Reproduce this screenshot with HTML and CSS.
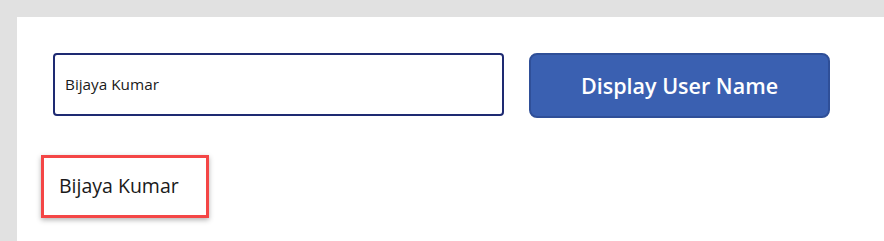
FILE: index.html
```html
<!DOCTYPE html>
<html>
<head>
<meta charset="utf-8">
<link rel="stylesheet" href="styles.css">
</head>
<body>
<div class="card">
  <div class="row">
    <div class="text-input">Bijaya Kumar</div>
    <button class="btn">Display User Name</button>
  </div>
  <div class="label">Bijaya Kumar</div>
</div>
</body>
</html>
```
FILE: styles.css
```css
html, body {
  margin: 0;
  padding: 0;
  height: 100%;
}
body {
  background: #e1e1e1;
  font-family: "Open Sans", "Noto Sans", sans-serif;
  overflow: hidden;
}
.card {
  background: #ffffff;
  margin: 17px 0 0 17px;
  height: calc(100% - 17px);
  padding: 36px 0 0 24px;
  box-sizing: border-box;
}
.row {
  display: flex;
  align-items: flex-start;
  gap: 25px;
  padding-left: 12px;
}
.text-input {
  width: 451px;
  height: 63px;
  box-sizing: border-box;
  border: 2px solid #1e2a72;
  border-radius: 4px;
  display: flex;
  align-items: center;
  padding-left: 10px;
  padding-bottom: 1px;
  font-size: 15.3px;
  color: #1a1a1a;
}
.btn {
  width: 301px;
  height: 65px;
  box-sizing: border-box;
  background: #3a60b1;
  border: 2px solid #2f4f98;
  border-radius: 8px;
  color: #ffffff;
  font-family: "Open Sans", "Noto Sans", sans-serif;
  font-weight: 600;
  font-size: 21.5px;
  padding: 0;
}
.label {
  margin-top: 37px;
  width: 168px;
  height: 63px;
  box-sizing: border-box;
  border: 3px solid #f44646;
  box-shadow: 0 2px 5px rgba(0, 0, 0, 0.3);
  display: flex;
  align-items: center;
  padding-left: 15px;
  padding-bottom: 2px;
  font-size: 19.5px;
  color: #1a1a1a;
}
```
